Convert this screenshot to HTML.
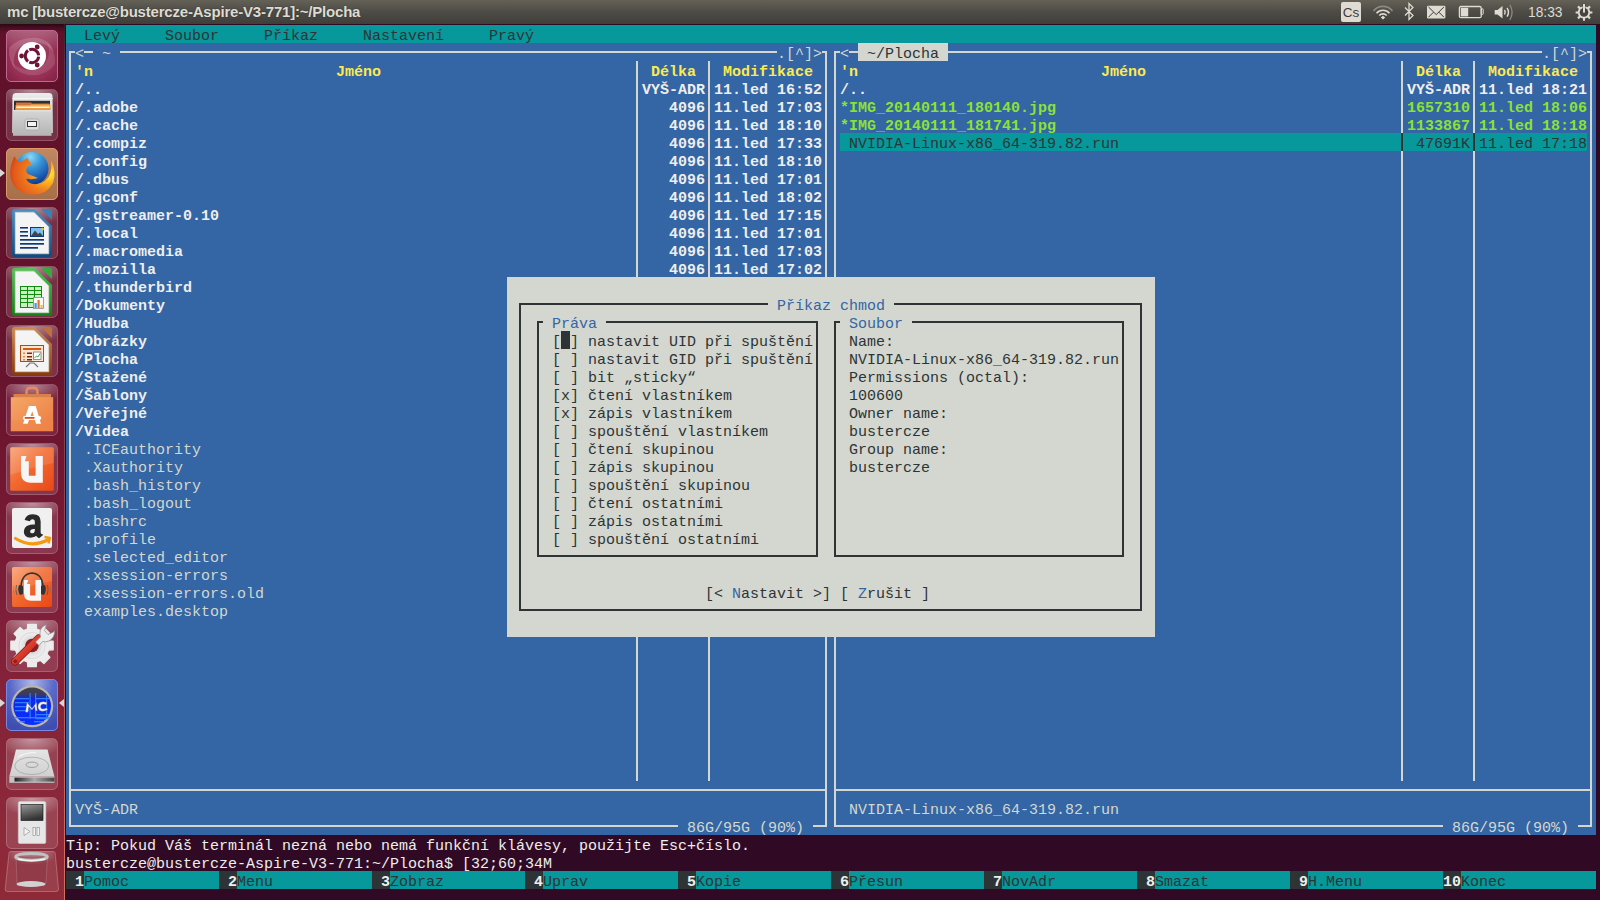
<!DOCTYPE html>
<html><head><meta charset="utf-8"><style>
html,body{margin:0;padding:0;}
body{width:1600px;height:900px;overflow:hidden;position:relative;background:#300A24;}
#t div,#t span,#l div{position:absolute;}
#t span{font-family:"Liberation Mono",monospace;font-size:15px;line-height:18px;white-space:pre;}
#t span.b{font-weight:bold;}
#t span.ms{font-family:"Liberation Sans",sans-serif;font-size:14px;letter-spacing:0.6px}
#top{position:absolute;left:0;top:0;width:1600px;height:24px;background:linear-gradient(#646157 0%,#4f4d47 45%,#3f3e39 100%);}
#top span{position:absolute;font-family:"Liberation Sans",sans-serif;font-weight:bold;font-size:15px;color:#dfdbd2;top:3px;white-space:pre;letter-spacing:-0.2px;text-shadow:0 0 1.5px rgba(0,0,0,0.45)}
#l{position:absolute;left:0;top:24px;width:64px;height:876px;background:linear-gradient(#2c0814 0px,#4a0e22 4px,#60122a 9px,#63132c 276px,#6e1530 416px,#7e1e38 580px,#8e2a38 836px,#8e2a38 876px);}
#l .tile{left:6px;width:52px;height:52px;}
#l svg{position:absolute;left:0;top:0}
</style></head><body>
<div id="top"><span style="left:7px">mc [bustercze@bustercze-Aspire-V3-771]:~/Plocha</span>
<svg style="position:absolute;left:1336px;top:0" width="264" height="24">
<rect x="5" y="2" width="20" height="20" rx="2" fill="#dfdbd2"/>
<text x="15" y="17.3" font-family="Liberation Sans" font-size="13.5" text-anchor="middle" fill="#3c3b37">Cs</text>
<g fill="none" stroke-linecap="butt">
<path d="M37.5 11 A12 12 0 0 1 56.5 11" stroke="#8c8a82" stroke-width="1.6"/>
<path d="M40.5 13.2 A8.5 8.5 0 0 1 53.5 13.2" stroke="#dfdbd2" stroke-width="1.6"/>
<path d="M43.3 15.5 A5 5 0 0 1 50.7 15.5" stroke="#dfdbd2" stroke-width="1.6"/>
</g>
<path d="M44.8 17.6 L47 15.8 L49.2 17.6 L47 19.6Z" fill="#dfdbd2"/>
<path d="M69 7.5 L77 15.5 L73 19.5 V3.5 L77 7.5 L69 15.5" fill="none" stroke="#dfdbd2" stroke-width="1.3" stroke-linejoin="miter"/>
<rect x="91" y="5.8" width="18.4" height="12.6" rx="1.2" fill="#dfdbd2"/>
<path d="M92.5 7 L100.2 14.6 L107.9 7 M92.5 17.2 L97.5 12.2 M107.9 17.2 L102.9 12.2" fill="none" stroke="#3a3935" stroke-width="1"/>
<rect x="123.4" y="6.5" width="21.8" height="11.2" rx="1.5" fill="none" stroke="#dfdbd2" stroke-width="1.3"/>
<rect x="145.2" y="8.8" width="2" height="5.6" rx="0.6" fill="none" stroke="#dfdbd2" stroke-width="1"/>
<rect x="124.8" y="7.8" width="7.4" height="8.6" fill="#dfdbd2"/>
<path d="M158.7 10 H161.5 L166.5 6 V18.5 L161.5 14.5 H158.7Z" fill="#dfdbd2"/>
<path d="M168.5 10 Q170 12.2 168.5 14.5" fill="none" stroke="#dfdbd2" stroke-width="1.4"/>
<path d="M171 7.8 Q174 12.2 171 16.7" fill="none" stroke="#dfdbd2" stroke-width="1.4"/>
<path d="M173.8 4.8 Q178.5 12.2 173.8 20" fill="none" stroke="#8c8a82" stroke-width="1.3"/>
<text x="192" y="16.7" font-family="Liberation Sans" font-size="14" fill="#dfdbd2" textLength="34.5" lengthAdjust="spacingAndGlyphs">18:33</text>
<g transform="translate(248,12.4)" fill="#dfdbd2">
<path d="M-1 -8.4 H1 V-6.2 L3.6 -5.2 L5.2 -6.8 L6.8 -5.2 L5.2 -3.6 L6.2 -1 H8.4 V1 H6.2 L5.2 3.6 L6.8 5.2 L5.2 6.8 L3.6 5.2 L1 6.2 V8.4 H-1 V6.2 L-3.6 5.2 L-5.2 6.8 L-6.8 5.2 L-5.2 3.6 L-6.2 1 H-8.4 V-1 H-6.2 L-5.2 -3.6 L-6.8 -5.2 L-5.2 -6.8 L-3.6 -5.2 L-1 -6.2Z"/>
<circle r="4.3" fill="#45443f"/>
</g>
<rect x="246.6" y="3.6" width="2.8" height="9.4" fill="#45443f"/><rect x="247" y="4" width="2" height="8.6" fill="#dfdbd2"/>
</svg></div>
<div id="l"><div class="tile" style="top:6px"><svg width="52" height="52" style="position:absolute;left:0;top:0"><defs><radialGradient id="ubg" cx="0.5" cy="0.5" r="0.72"><stop offset="0" stop-color="#a84868"/><stop offset="0.6" stop-color="#963054"/><stop offset="1" stop-color="#821e44"/></radialGradient>
<linearGradient id="ubt" x1="0" y1="0" x2="0" y2="1"><stop offset="0" stop-color="#fff" stop-opacity="0.25"/><stop offset="0.4" stop-color="#fff" stop-opacity="0"/></linearGradient></defs>
<rect x="0.5" y="0.5" width="51" height="51" rx="4.5" fill="url(#ubg)" stroke="#c87098" stroke-opacity="0.9"/>
<rect x="1" y="1" width="50" height="50" rx="4" fill="url(#ubt)"/>
<path d="M3 18 Q14 6 32 8 Q44 10 48 22 Q40 12 28 12 Q14 12 9 24 Q6 32 10 40 Q2 30 3 18Z" fill="#fff" fill-opacity="0.16"/>
<path d="M49 34 Q40 47 22 45 Q10 43 5 32 Q14 41 26 40 Q38 39 42 28 Q45 19 40 11 Q50 20 49 34Z" fill="#fff" fill-opacity="0.12"/>
<circle cx="26" cy="26" r="14" fill="#fff"/>
<path d="M32.66 26.70 A6.7 6.7 0 0 1 23.27 32.12 M22.06 31.42 A6.7 6.7 0 0 1 22.06 20.58 M23.27 19.88 A6.7 6.7 0 0 1 32.66 25.30 " fill="none" stroke="#6e1238" stroke-width="3"/><g fill="#6e1238"><circle cx="15.60" cy="26.00" r="2.4"/><circle cx="31.20" cy="16.99" r="2.4"/><circle cx="31.20" cy="35.01" r="2.4"/></g></svg></div><div class="tile" style="top:65px"><svg width="52" height="52" style="position:absolute;left:0;top:0"><rect x="0.5" y="0.5" width="51" height="51" rx="5" fill="#ffffff" fill-opacity="0.13" stroke="#ffffff" stroke-opacity="0.25"/><defs><radialGradient id="glw1" cx="0.5" cy="0" r="0.7"><stop offset="0" stop-color="#fff" stop-opacity="0.45"/><stop offset="1" stop-color="#fff" stop-opacity="0"/></radialGradient></defs><rect x="1" y="1" width="50" height="26" rx="4" fill="url(#glw1)"/><defs><linearGradient id="fb" x1="0" y1="0" x2="0" y2="1"><stop offset="0" stop-color="#ececec"/><stop offset="1" stop-color="#bcbcbc"/></linearGradient>
<linearGradient id="fd" x1="0" y1="0" x2="0" y2="1"><stop offset="0" stop-color="#d6d6d6"/><stop offset="1" stop-color="#b4b4b4"/></linearGradient></defs>
<path d="M6.5 7 Q7 4 10 4 H43 Q46 4 46.5 7 L47 44 H6 Z" fill="url(#fb)"/>
<rect x="6" y="9" width="41" height="1" fill="#fff" fill-opacity="0.6"/>
<rect x="8" y="11.8" width="36" height="9.5" fill="#2e3030"/>
<path d="M10 13.5 H25 L26 14.5 H43.5 V21.3 H10Z" fill="#d8703a"/>
<path d="M9.5 16.3 H24 L25 15.5 H44.5 V21.3 H9.5Z" fill="#f2b050"/>
<rect x="10.5" y="17.6" width="33" height="1.3" fill="#fffaf0"/>
<rect x="9.5" y="19.2" width="35" height="2.1" fill="#e89a40"/>
<rect x="7" y="21.3" width="38.5" height="25.5" fill="url(#fd)"/>
<rect x="7" y="21.3" width="38.5" height="1" fill="#e8e8e8"/>
<rect x="19" y="30" width="14" height="11" rx="2" fill="#dcdcdc" stroke="#a8a8a8" stroke-width="0.8"/>
<rect x="21.5" y="32.5" width="9" height="5" fill="#f4f4f4" stroke="#333" stroke-width="1"/></svg></div><div class="tile" style="top:124px"><svg width="52" height="52" style="position:absolute;left:0;top:0"><defs><linearGradient id="fft" x1="0" y1="0" x2="0" y2="1"><stop offset="0" stop-color="#c08866"/><stop offset="0.5" stop-color="#b07a52"/><stop offset="1" stop-color="#a86e48"/></linearGradient>
<radialGradient id="ffg" cx="0.45" cy="0.15" r="0.9"><stop offset="0" stop-color="#8ad8f8"/><stop offset="0.35" stop-color="#3a9ad8"/><stop offset="0.75" stop-color="#1a58b0"/><stop offset="1" stop-color="#0e2e78"/></radialGradient>
<radialGradient id="ffo" cx="0.85" cy="0.45" r="0.9"><stop offset="0" stop-color="#fff040"/><stop offset="0.2" stop-color="#ffc020"/><stop offset="0.5" stop-color="#f08020"/><stop offset="0.85" stop-color="#e45a1a"/><stop offset="1" stop-color="#d03a18"/></radialGradient></defs>
<rect x="0.5" y="0.5" width="51" height="51" rx="4.5" fill="url(#fft)" stroke="#e8a070" stroke-opacity="0.9"/>
<circle cx="26" cy="20.5" r="16.5" fill="url(#ffg)"/>
<path d="M8.3 8.3 Q3 20 4.5 29 Q8 45 26 46.5 Q41 47 47 35 Q51 24 45 12 Q47 27 39 33 Q32 38 25 35.5 Q20 33 20.5 30.5 Q26 32 32 30 Q27 28 22 26 Q19 23 21 19.5 Q23 17 26 16 L23 13 L21.5 9.8 Q18 13 14 14 Q11 13 8.3 8.3Z" fill="url(#ffo)"/></svg></div><div class="tile" style="top:183px"><svg width="52" height="52" style="position:absolute;left:0;top:0"><rect x="0.5" y="0.5" width="51" height="51" rx="5" fill="#ffffff" fill-opacity="0.13" stroke="#ffffff" stroke-opacity="0.25"/><defs><radialGradient id="glw3" cx="0.5" cy="0" r="0.7"><stop offset="0" stop-color="#fff" stop-opacity="0.45"/><stop offset="1" stop-color="#fff" stop-opacity="0"/></radialGradient></defs><rect x="1" y="1" width="50" height="26" rx="4" fill="url(#glw3)"/><defs><linearGradient id="lg3" x1="0" y1="0" x2="0" y2="1"><stop offset="0" stop-color="#4a90c0"/><stop offset="1" stop-color="#0e4a80"/></linearGradient></defs>
<path d="M8 2 H28.5 L46 19 V47 Q46 50 43 50 H9 Q6 50 6 47 V5 Q6 2 9 2Z" fill="url(#lg3)"/>
<path d="M35 2 H44 Q46 2 46 4 V13 Z" fill="#3a80b8"/>
<path d="M9.2 5.2 H28 L42.8 20 V46.8 H9.2Z" fill="#f4f4f4"/>
<path d="M9.2 5.2 H28 L42.8 20 V46.8 H9.2Z" fill="none" stroke="#ccc" stroke-width="0.6"/>

<g fill="#0a3a7a"><rect x="14" y="20" width="8" height="1.6"/><rect x="14" y="24" width="8" height="1.6"/><rect x="14" y="28" width="8" height="1.6"/>
<rect x="14" y="32" width="24" height="1.7"/><rect x="14" y="36" width="24" height="1.7"/><rect x="14" y="40" width="18" height="1.7"/></g>
<rect x="24" y="20" width="14" height="10" fill="#0a3a7a"/><rect x="25" y="21" width="12" height="8" fill="#7ac0f0"/>
<path d="M25 29 L29 23.5 L32 27 L34 25.5 L37 29Z" fill="#444"/><circle cx="36.5" cy="22" r="1.5" fill="#e8c030"/></svg></div><div class="tile" style="top:242px"><svg width="52" height="52" style="position:absolute;left:0;top:0"><rect x="0.5" y="0.5" width="51" height="51" rx="5" fill="#ffffff" fill-opacity="0.13" stroke="#ffffff" stroke-opacity="0.25"/><defs><radialGradient id="glw4" cx="0.5" cy="0" r="0.7"><stop offset="0" stop-color="#fff" stop-opacity="0.45"/><stop offset="1" stop-color="#fff" stop-opacity="0"/></radialGradient></defs><rect x="1" y="1" width="50" height="26" rx="4" fill="url(#glw4)"/><defs><linearGradient id="lg4" x1="0" y1="0" x2="0" y2="1"><stop offset="0" stop-color="#5ac05a"/><stop offset="1" stop-color="#128012"/></linearGradient></defs>
<path d="M8 2 H28.5 L46 19 V47 Q46 50 43 50 H9 Q6 50 6 47 V5 Q6 2 9 2Z" fill="url(#lg4)"/>
<path d="M35 2 H44 Q46 2 46 4 V13 Z" fill="#3aa83a"/>
<path d="M9.2 5.2 H28 L42.8 20 V46.8 H9.2Z" fill="#f4f4f4"/>
<path d="M9.2 5.2 H28 L42.8 20 V46.8 H9.2Z" fill="none" stroke="#ccc" stroke-width="0.6"/>

<rect x="14" y="20" width="22" height="22" fill="#128a12"/>
<g fill="#c8f0c0"><rect x="15" y="21" width="6" height="3"/><rect x="22" y="21" width="6" height="3"/><rect x="29" y="21" width="6" height="3"/>
<rect x="15" y="25" width="6" height="3"/><rect x="22" y="25" width="6" height="3"/><rect x="29" y="25" width="6" height="3"/>
<rect x="15" y="29" width="6" height="3"/><rect x="22" y="29" width="6" height="3"/><rect x="29" y="29" width="6" height="3"/>
<rect x="15" y="33" width="6" height="3"/><rect x="22" y="33" width="6" height="3"/><rect x="15" y="37" width="6" height="4"/><rect x="22" y="37" width="6" height="4"/></g>
<rect x="27.5" y="31.5" width="10" height="11" fill="#fafafa" stroke="#888" stroke-width="0.8"/>
<rect x="28.5" y="37" width="2.2" height="5" fill="#3a9ae8"/><rect x="31.5" y="34" width="2.2" height="8" fill="#e8702a"/><rect x="34.5" y="39" width="2.2" height="3" fill="#f0c030"/></svg></div><div class="tile" style="top:301px"><svg width="52" height="52" style="position:absolute;left:0;top:0"><rect x="0.5" y="0.5" width="51" height="51" rx="5" fill="#ffffff" fill-opacity="0.13" stroke="#ffffff" stroke-opacity="0.25"/><defs><radialGradient id="glw5" cx="0.5" cy="0" r="0.7"><stop offset="0" stop-color="#fff" stop-opacity="0.45"/><stop offset="1" stop-color="#fff" stop-opacity="0"/></radialGradient></defs><rect x="1" y="1" width="50" height="26" rx="4" fill="url(#glw5)"/><defs><linearGradient id="lg5" x1="0" y1="0" x2="0" y2="1"><stop offset="0" stop-color="#d08a50"/><stop offset="1" stop-color="#8a3a0a"/></linearGradient></defs>
<path d="M8 2 H28.5 L46 19 V47 Q46 50 43 50 H9 Q6 50 6 47 V5 Q6 2 9 2Z" fill="url(#lg5)"/>
<path d="M35 2 H44 Q46 2 46 4 V13 Z" fill="#c0703a"/>
<path d="M9.2 5.2 H28 L42.8 20 V46.8 H9.2Z" fill="#f4f4f4"/>
<path d="M9.2 5.2 H28 L42.8 20 V46.8 H9.2Z" fill="none" stroke="#ccc" stroke-width="0.6"/>

<rect x="14" y="20" width="24" height="17" fill="#b04a10"/><rect x="15" y="21" width="22" height="15" fill="#fbe6d4"/>
<rect x="17" y="23" width="18" height="2" fill="#d85a10"/>
<g fill="#e88050"><rect x="17" y="27.5" width="2" height="1.5"/><rect x="17" y="31" width="2" height="1.5"/><rect x="17" y="34" width="2" height="1.5"/></g>
<g fill="#7a2a0a"><rect x="21" y="27.5" width="5" height="1.5"/><rect x="21" y="31" width="5" height="1.5"/><rect x="21" y="34" width="5" height="1.5"/></g>
<rect x="27.5" y="27" width="7.5" height="7.5" fill="#fff" stroke="#777" stroke-width="0.8"/><path d="M28.5 33 L30.5 31 L32 32 L34 28.5" stroke="#3aa83a" fill="none" stroke-width="1"/>
<path d="M20 42 L24 38 H28 L32 42" stroke="#777" fill="none" stroke-width="1.2"/></svg></div><div class="tile" style="top:360px"><svg width="52" height="52" style="position:absolute;left:0;top:0"><rect x="0.5" y="0.5" width="51" height="51" rx="5" fill="#e0a0c0" fill-opacity="0.12" stroke="#ffffff" stroke-opacity="0.25"/><defs><radialGradient id="glw6" cx="0.5" cy="0" r="0.7"><stop offset="0" stop-color="#fff" stop-opacity="0.45"/><stop offset="1" stop-color="#fff" stop-opacity="0"/></radialGradient></defs><rect x="1" y="1" width="50" height="26" rx="4" fill="url(#glw6)"/><defs><linearGradient id="sbag" x1="0" y1="0" x2="1" y2="1"><stop offset="0" stop-color="#f4a868"/><stop offset="1" stop-color="#ec7a3e"/></linearGradient></defs>
<path d="M20.5 17 V8 Q20.5 4 24 4 H28 Q31.5 4 31.5 8 V17" stroke="#ea8a5a" stroke-width="2.4" fill="none"/>
<path d="M7.5 10 H45 V14 H7.5Z" fill="#d8804a"/>
<rect x="4.8" y="13.2" width="42.4" height="34" fill="url(#sbag)"/>
<rect x="4.8" y="36.6" width="42.4" height="10.6" fill="#f08850" fill-opacity="0.5"/>
<path d="M22.9 22 H29.7 L35 39.7 H30 L26.3 27.2 L21.6 39.7 H17Z" fill="#fff"/>
<rect x="16.9" y="31.9" width="18.3" height="4" rx="2" fill="#fff"/><rect x="18.5" y="33.1" width="10.2" height="1.6" rx="0.8" fill="#e84a10"/></svg></div><div class="tile" style="top:419px"><svg width="52" height="52" style="position:absolute;left:0;top:0"><rect x="0.5" y="0.5" width="51" height="51" rx="5" fill="#ffffff" fill-opacity="0.13" stroke="#ffffff" stroke-opacity="0.25"/><defs><radialGradient id="glw7" cx="0.5" cy="0" r="0.7"><stop offset="0" stop-color="#fff" stop-opacity="0.45"/><stop offset="1" stop-color="#fff" stop-opacity="0"/></radialGradient></defs><rect x="1" y="1" width="50" height="26" rx="4" fill="url(#glw7)"/><defs><linearGradient id="u1g" x1="0" y1="0" x2="1" y2="1"><stop offset="0" stop-color="#f8a070"/><stop offset="0.45" stop-color="#f26a30"/><stop offset="1" stop-color="#e84818"/></linearGradient></defs>
<rect x="4.2" y="4.2" width="43.6" height="43.6" rx="1.5" fill="url(#u1g)"/><path d="M4.2 5.7 Q4.2 4.2 5.7 4.2 H46.3 Q47.8 4.2 47.8 5.7 V20 Q26 24 4.2 32Z" fill="#fff" fill-opacity="0.12"/><g transform="translate(15,13) scale(1.0)"><path d="M0 0 H5.5 L3.8 5.2 H7.8 V19.8 H14.6 V0 H21.8 V26.7 H9 Q0 26.7 0 17Z" fill="#f6f6f6"/></g></svg></div><div class="tile" style="top:478px"><svg width="52" height="52" style="position:absolute;left:0;top:0"><rect x="0.5" y="0.5" width="51" height="51" rx="5" fill="#ffffff" fill-opacity="0.13" stroke="#ffffff" stroke-opacity="0.25"/><defs><radialGradient id="glw8" cx="0.5" cy="0" r="0.7"><stop offset="0" stop-color="#fff" stop-opacity="0.45"/><stop offset="1" stop-color="#fff" stop-opacity="0"/></radialGradient></defs><rect x="1" y="1" width="50" height="26" rx="4" fill="url(#glw8)"/><rect x="6" y="6" width="40" height="40" rx="2" fill="#f0f0f0"/>
<path d="M19.5 17.5 Q21 13 27 13 Q34 13 34 19.5 V30.5 Q34 32.5 36 33 L33 35.5 Q31 34.5 30.5 33 Q28 35 24.5 35 Q18.5 35 18.5 29.5 Q18.5 23 29.5 23 V20 Q29.5 16.5 26.5 16.5 Q24 16.5 23.5 18.5Z M29.5 26 Q23.5 26 23.5 29.5 Q23.5 32 26 32 Q29.5 32 29.5 28Z" fill="#2a2a2a" stroke="#2a2a2a" stroke-width="1.3"/>
<path d="M9.5 36.5 Q26 46.5 42.5 37.5" stroke="#f49a10" stroke-width="3.2" fill="none" stroke-linecap="round"/><path d="M38.5 35 L44 36 L42.5 41.5" stroke="#f49a10" stroke-width="2.4" fill="none" stroke-linejoin="round"/></svg></div><div class="tile" style="top:537px"><svg width="52" height="52" style="position:absolute;left:0;top:0"><rect x="0.5" y="0.5" width="51" height="51" rx="5" fill="#ffffff" fill-opacity="0.13" stroke="#ffffff" stroke-opacity="0.25"/><defs><radialGradient id="glw9" cx="0.5" cy="0" r="0.7"><stop offset="0" stop-color="#fff" stop-opacity="0.45"/><stop offset="1" stop-color="#fff" stop-opacity="0"/></radialGradient></defs><rect x="1" y="1" width="50" height="26" rx="4" fill="url(#glw9)"/><defs><linearGradient id="u1m" x1="0" y1="0" x2="1" y2="1"><stop offset="0" stop-color="#f8a070"/><stop offset="0.45" stop-color="#f26a30"/><stop offset="1" stop-color="#e84818"/></linearGradient></defs>
<rect x="6" y="6" width="40" height="40" rx="2" fill="url(#u1m)"/><path d="M6 8 Q6 6 8 6 H44 Q46 6 46 8 V20 Q26 24 6 30Z" fill="#fff" fill-opacity="0.12"/>
<path d="M15 30 Q14 13 26 12 Q38 13 37 30" stroke="#333" stroke-width="1.6" fill="none"/>
<path d="M13 24 Q11 29 14 34 L17 33 V25Z" fill="#333"/><path d="M39 24 Q41 29 38 34 L35 33 V25Z" fill="#333"/>
<path d="M10.5 24 Q9 29 11 34" stroke="#555" fill="none" stroke-width="0.8"/><path d="M41.5 24 Q43 29 41 34" stroke="#555" fill="none" stroke-width="0.8"/><path d="M8 25 Q7 29 8.3 33" stroke="#666" fill="none" stroke-width="0.6" opacity="0.7"/><path d="M44 25 Q45 29 43.7 33" stroke="#666" fill="none" stroke-width="0.6" opacity="0.7"/><g transform="translate(18,19) scale(0.78)"><path d="M0 0 H5.5 L3.8 5.2 H7.8 V19.8 H14.6 V0 H21.8 V26.7 H9 Q0 26.7 0 17Z" fill="#f6f6f6"/></g></svg></div><div class="tile" style="top:596px"><svg width="52" height="52" style="position:absolute;left:0;top:0"><rect x="0.5" y="0.5" width="51" height="51" rx="5" fill="#ffffff" fill-opacity="0.13" stroke="#ffffff" stroke-opacity="0.25"/><defs><radialGradient id="glw10" cx="0.5" cy="0" r="0.7"><stop offset="0" stop-color="#fff" stop-opacity="0.45"/><stop offset="1" stop-color="#fff" stop-opacity="0"/></radialGradient></defs><rect x="1" y="1" width="50" height="26" rx="4" fill="url(#glw10)"/><defs><linearGradient id="wr" x1="0" y1="0" x2="1" y2="1"><stop offset="0" stop-color="#f06a58"/><stop offset="0.5" stop-color="#d83a2a"/><stop offset="1" stop-color="#a81a1a"/></linearGradient>
<radialGradient id="gr" cx="0.5" cy="0.5" r="0.5"><stop offset="0.45" stop-color="#d4d4d4"/><stop offset="1" stop-color="#f2f2f2"/></radialGradient></defs>
<path d="M42.57 20.90 L47.17 21.19 L47.17 29.81 L42.57 30.10 L40.97 33.97 L44.01 37.42 L37.92 43.51 L34.47 40.47 L30.60 42.07 L30.31 46.67 L21.69 46.67 L21.40 42.07 L17.53 40.47 L14.08 43.51 L7.99 37.42 L11.03 33.97 L9.43 30.10 L4.83 29.81 L4.83 21.19 L9.43 20.90 L11.03 17.03 L7.99 13.58 L14.08 7.49 L17.53 10.53 L21.40 8.93 L21.69 4.33 L30.31 4.33 L30.60 8.93 L34.47 10.53 L37.92 7.49 L44.01 13.58 L40.97 17.03Z" fill="#ececec" stroke="#ececec" stroke-width="1.2" stroke-linejoin="round"/>
<circle cx="26" cy="25.5" r="13" fill="url(#gr)" stroke="#c8c8c8" stroke-width="0.6"/><circle cx="26" cy="25.5" r="6.8" fill="#8a2030"/>
<path d="M9 41.5 L32.5 18.5" stroke="#8a1414" stroke-width="7.8" stroke-linecap="round"/>
<path d="M9 41.5 L32.5 18.5" stroke="url(#wr)" stroke-width="6.4" stroke-linecap="round"/>
<circle cx="9.2" cy="41.3" r="1.5" fill="#a02020" stroke="#701010" stroke-width="0.6"/>
<path d="M29.5 22 L34.5 17 Q32.5 10 37.5 6 L40.5 4.8 L38.5 10.5 L42 14.5 L47.5 12 L48.5 10.5 Q49 17.5 43 21 Q39.5 22.5 36.5 21.5 L33 25.5Z" fill="#ececec" stroke="#8a8a8a" stroke-width="0.7"/></svg></div><div class="tile" style="top:655px"><svg width="52" height="52" style="position:absolute;left:0;top:0"><defs><radialGradient id="mct" cx="0.5" cy="0.05" r="0.95"><stop offset="0" stop-color="#b0b8e8"/><stop offset="0.45" stop-color="#5a6ac8"/><stop offset="1" stop-color="#3e4eb0"/></radialGradient>
<linearGradient id="mcs" x1="0" y1="0" x2="0" y2="1"><stop offset="0" stop-color="#444"/><stop offset="0.18" stop-color="#3a3a60"/><stop offset="0.3" stop-color="#0a28f0"/><stop offset="1" stop-color="#0a30ff"/></linearGradient></defs>
<rect x="0.5" y="0.5" width="51" height="51" rx="4.5" fill="url(#mct)" stroke="#7a90f0" stroke-opacity="0.9"/>
<circle cx="26.2" cy="27.3" r="21" fill="#bcb6ae"/><circle cx="26.2" cy="27.3" r="18.8" fill="url(#mcs)"/>
<g fill="#3a8aff" opacity="0.85"><rect x="9" y="19" width="14" height="1.3"/><rect x="9" y="23" width="14" height="1.3"/><rect x="9" y="27" width="14" height="1.3"/><rect x="9" y="31" width="14" height="1.3"/>
<rect x="30" y="19" width="13" height="1.3"/><rect x="30" y="35" width="13" height="1.3"/><rect x="30" y="39" width="13" height="1.3"/><rect x="8" y="38" width="36" height="1.3"/>
<rect x="13" y="42" width="6" height="1.3"/><rect x="28" y="42" width="10" height="1.3"/>
<rect x="23.5" y="14" width="1.2" height="26"/><rect x="29" y="14" width="1.2" height="26"/><rect x="40" y="16" width="1.2" height="24"/></g>
<path d="M19.5 33 L21 23.5 L26 29.5 L30.5 23.5 L31.2 32 L29.2 31.3 L28.8 27.3 L26 31 L22.8 27.5 L21.8 33.2Z" fill="#f4f4f4" stroke="#888" stroke-width="0.4"/>
<path d="M41 23.5 Q37 22 34.3 23.3 Q31.6 25 32 28.5 Q32.5 32.2 36.5 32.2 Q39 32.2 41.5 30.8 L40.6 29 Q38.5 30 36.8 30 Q34.6 30 34.5 27.8 Q34.5 25.3 37 25.1 Q38.8 25 40.3 25.8Z" fill="#f4f4f4" stroke="#888" stroke-width="0.4"/></svg></div><div class="tile" style="top:714px"><svg width="52" height="52" style="position:absolute;left:0;top:0"><rect x="0.5" y="0.5" width="51" height="51" rx="5" fill="#ffffff" fill-opacity="0.13" stroke="#ffffff" stroke-opacity="0.25"/><defs><radialGradient id="glw11" cx="0.5" cy="0" r="0.7"><stop offset="0" stop-color="#fff" stop-opacity="0.45"/><stop offset="1" stop-color="#fff" stop-opacity="0"/></radialGradient></defs><rect x="1" y="1" width="50" height="26" rx="4" fill="url(#glw11)"/><defs><linearGradient id="dsk" x1="0" y1="0" x2="0" y2="1"><stop offset="0" stop-color="#e4e4e4"/><stop offset="1" stop-color="#d0d0d0"/></linearGradient>
<linearGradient id="dsf" x1="0" y1="0" x2="1" y2="0"><stop offset="0" stop-color="#222"/><stop offset="0.5" stop-color="#aaa"/><stop offset="1" stop-color="#444"/></linearGradient></defs>
<path d="M10 11.5 H41.5 L48.4 38.6 H3.3Z" fill="url(#dsk)"/>
<rect x="3.3" y="38.4" width="45.1" height="6.4" fill="#c4c4c4"/>
<rect x="8.5" y="39.6" width="39.9" height="4" fill="url(#dsf)"/>
<path d="M12 19 Q22 14 30 14.5" stroke="#f4f4f4" stroke-width="1.2" fill="none"/>
<ellipse cx="25.8" cy="27.9" rx="17" ry="8.7" fill="none" stroke="#a0a0a0" stroke-width="0.7"/><ellipse cx="26" cy="26.8" rx="6" ry="2.7" fill="none" stroke="#909090" stroke-width="0.8"/></svg></div><div class="tile" style="top:773px"><svg width="52" height="52" style="position:absolute;left:0;top:0"><rect x="0.5" y="0.5" width="51" height="51" rx="5" fill="#ffffff" fill-opacity="0.13" stroke="#ffffff" stroke-opacity="0.25"/><defs><radialGradient id="glw12" cx="0.5" cy="0" r="0.7"><stop offset="0" stop-color="#fff" stop-opacity="0.45"/><stop offset="1" stop-color="#fff" stop-opacity="0"/></radialGradient></defs><rect x="1" y="1" width="50" height="26" rx="4" fill="url(#glw12)"/><defs><linearGradient id="ips" x1="0" y1="0" x2="0.3" y2="1"><stop offset="0" stop-color="#999"/><stop offset="1" stop-color="#333"/></linearGradient></defs>
<rect x="12.3" y="4.5" width="27.5" height="42" rx="1.5" fill="#e6e6e6" stroke="#cfcfcf" stroke-width="0.6"/>
<rect x="15" y="7.5" width="22" height="16" fill="url(#ips)" stroke="#222" stroke-width="0.7"/>
<path d="M18 30.5 L24 34.5 L18 38.5Z" fill="#f4f4f4" stroke="#888" stroke-width="0.6"/>
<rect x="27" y="30.5" width="2.3" height="8" fill="#f4f4f4" stroke="#888" stroke-width="0.6"/><rect x="31" y="30.5" width="2.3" height="8" fill="#f4f4f4" stroke="#888" stroke-width="0.6"/></svg></div><svg style="position:absolute;left:0;top:820px" width="64" height="56"><defs><radialGradient id="trg" cx="0.5" cy="0" r="0.6"><stop offset="0" stop-color="#fff" stop-opacity="0.35"/><stop offset="1" stop-color="#fff" stop-opacity="0"/></radialGradient></defs><path d="M10.5 7.5 H53.5 Q55 7.5 55.2 9 L58.5 45 Q58.5 47.5 56 47.5 H7.5 Q5 47.5 5.2 45 L9 9 Q9 7.5 10.5 7.5Z" fill="#fff" fill-opacity="0.1" stroke="#fff" stroke-opacity="0.25"/><path d="M10.5 7.5 H53.5 L56 30 H8Z" fill="url(#trg)"/><path d="M16 12 L17 39 Q32 44 46 39 L47.5 12Z" fill="#000" fill-opacity="0.06" stroke="#fff" stroke-opacity="0.15"/><ellipse cx="31.5" cy="12.8" rx="15.8" ry="3.4" fill="none" stroke="#bfc2bf" stroke-width="3"/><path d="M18 15 Q31.5 18.5 45 15" stroke="#f4f4f4" stroke-width="1.4" fill="none"/><ellipse cx="31" cy="40" rx="14.5" ry="3" fill="#d0d4d0"/></svg><div style="left:0;top:145px;width:0;height:0;border-top:4.5px solid transparent;border-bottom:4.5px solid transparent;border-left:5px solid #d8d8d8"></div><div style="left:0;top:675px;width:0;height:0;border-top:4.5px solid transparent;border-bottom:4.5px solid transparent;border-left:5px solid #d8d8d8"></div><div style="left:59px;top:675px;width:0;height:0;border-top:4.5px solid transparent;border-bottom:4.5px solid transparent;border-right:5px solid #d8d8d8"></div></div>
<div style="position:absolute;left:64px;top:24px;width:1px;height:876px;background:linear-gradient(#3a1a24 0px,#5e3444 40px,#6a3a4a 276px,#9a5058 580px,#d07060 836px,#d07060 876px)"></div>
<div id="t"><div style="left:66px;top:25px;width:1530px;height:18px;background:#06989A;"></div><span style="left:84px;top:28px;color:#2E3436">Levý</span><span style="left:165px;top:28px;color:#2E3436">Soubor</span><span style="left:264px;top:28px;color:#2E3436">Příkaz</span><span style="left:363px;top:28px;color:#2E3436">Nastavení</span><span style="left:489px;top:28px;color:#2E3436">Pravý</span><div style="left:66px;top:43px;width:1530px;height:792px;background:#3465A4;"></div><div style="left:69px;top:51px;width:2px;height:776px;background:#D3D7CF;"></div><div style="left:825px;top:51px;width:2px;height:776px;background:#D3D7CF;"></div><div style="left:69px;top:51px;width:6px;height:2px;background:#D3D7CF;"></div><div style="left:84px;top:51px;width:9px;height:2px;background:#D3D7CF;"></div><span style="left:75px;top:46px;color:#D3D7CF">&lt;</span><span style="left:93px;top:46px;color:#D3D7CF"> ~ </span><div style="left:120px;top:51px;width:657px;height:2px;background:#D3D7CF;"></div><span style="left:777px;top:46px;color:#D3D7CF">.[^]&gt;</span><div style="left:822px;top:51px;width:5px;height:2px;background:#D3D7CF;"></div><span class="b" style="left:75px;top:64px;color:#FCE94F">'n</span><span class="b" style="left:336px;top:64px;color:#FCE94F">Jméno</span><span class="b" style="left:651px;top:64px;color:#FCE94F">Délka</span><span class="b" style="left:723px;top:64px;color:#FCE94F">Modifikace</span><div style="left:636px;top:61px;width:2px;height:720px;background:#D3D7CF;"></div><div style="left:708px;top:61px;width:2px;height:720px;background:#D3D7CF;"></div><span class="b" style="left:75px;top:82px;color:#EEEEEC">/..</span><span class="b" style="left:642px;top:82px;color:#EEEEEC">VYŠ-ADR</span><span class="b" style="left:714px;top:82px;color:#EEEEEC">11.led 16:52</span><span class="b" style="left:75px;top:100px;color:#EEEEEC">/.adobe</span><span class="b" style="left:642px;top:100px;color:#EEEEEC">   4096</span><span class="b" style="left:714px;top:100px;color:#EEEEEC">11.led 17:03</span><span class="b" style="left:75px;top:118px;color:#EEEEEC">/.cache</span><span class="b" style="left:642px;top:118px;color:#EEEEEC">   4096</span><span class="b" style="left:714px;top:118px;color:#EEEEEC">11.led 18:10</span><span class="b" style="left:75px;top:136px;color:#EEEEEC">/.compiz</span><span class="b" style="left:642px;top:136px;color:#EEEEEC">   4096</span><span class="b" style="left:714px;top:136px;color:#EEEEEC">11.led 17:33</span><span class="b" style="left:75px;top:154px;color:#EEEEEC">/.config</span><span class="b" style="left:642px;top:154px;color:#EEEEEC">   4096</span><span class="b" style="left:714px;top:154px;color:#EEEEEC">11.led 18:10</span><span class="b" style="left:75px;top:172px;color:#EEEEEC">/.dbus</span><span class="b" style="left:642px;top:172px;color:#EEEEEC">   4096</span><span class="b" style="left:714px;top:172px;color:#EEEEEC">11.led 17:01</span><span class="b" style="left:75px;top:190px;color:#EEEEEC">/.gconf</span><span class="b" style="left:642px;top:190px;color:#EEEEEC">   4096</span><span class="b" style="left:714px;top:190px;color:#EEEEEC">11.led 18:02</span><span class="b" style="left:75px;top:208px;color:#EEEEEC">/.gstreamer-0.10</span><span class="b" style="left:642px;top:208px;color:#EEEEEC">   4096</span><span class="b" style="left:714px;top:208px;color:#EEEEEC">11.led 17:15</span><span class="b" style="left:75px;top:226px;color:#EEEEEC">/.local</span><span class="b" style="left:642px;top:226px;color:#EEEEEC">   4096</span><span class="b" style="left:714px;top:226px;color:#EEEEEC">11.led 17:01</span><span class="b" style="left:75px;top:244px;color:#EEEEEC">/.macromedia</span><span class="b" style="left:642px;top:244px;color:#EEEEEC">   4096</span><span class="b" style="left:714px;top:244px;color:#EEEEEC">11.led 17:03</span><span class="b" style="left:75px;top:262px;color:#EEEEEC">/.mozilla</span><span class="b" style="left:642px;top:262px;color:#EEEEEC">   4096</span><span class="b" style="left:714px;top:262px;color:#EEEEEC">11.led 17:02</span><span class="b" style="left:75px;top:280px;color:#EEEEEC">/.thunderbird</span><span class="b" style="left:75px;top:298px;color:#EEEEEC">/Dokumenty</span><span class="b" style="left:75px;top:316px;color:#EEEEEC">/Hudba</span><span class="b" style="left:75px;top:334px;color:#EEEEEC">/Obrázky</span><span class="b" style="left:75px;top:352px;color:#EEEEEC">/Plocha</span><span class="b" style="left:75px;top:370px;color:#EEEEEC">/Stažené</span><span class="b" style="left:75px;top:388px;color:#EEEEEC">/Šablony</span><span class="b" style="left:75px;top:406px;color:#EEEEEC">/Veřejné</span><span class="b" style="left:75px;top:424px;color:#EEEEEC">/Videa</span><span style="left:75px;top:442px;color:#D3D7CF"> .ICEauthority</span><span style="left:75px;top:460px;color:#D3D7CF"> .Xauthority</span><span style="left:75px;top:478px;color:#D3D7CF"> .bash_history</span><span style="left:75px;top:496px;color:#D3D7CF"> .bash_logout</span><span style="left:75px;top:514px;color:#D3D7CF"> .bashrc</span><span style="left:75px;top:532px;color:#D3D7CF"> .profile</span><span style="left:75px;top:550px;color:#D3D7CF"> .selected_editor</span><span style="left:75px;top:568px;color:#D3D7CF"> .xsession-errors</span><span style="left:75px;top:586px;color:#D3D7CF"> .xsession-errors.old</span><span style="left:75px;top:604px;color:#D3D7CF"> examples.desktop</span><div style="left:69px;top:789px;width:758px;height:2px;background:#D3D7CF;"></div><span style="left:75px;top:802px;color:#D3D7CF">VYŠ-ADR</span><div style="left:69px;top:825px;width:609px;height:2px;background:#D3D7CF;"></div><span style="left:687px;top:820px;color:#D3D7CF">86G/95G (90%)</span><div style="left:813px;top:825px;width:14px;height:2px;background:#D3D7CF;"></div><div style="left:834px;top:51px;width:2px;height:776px;background:#D3D7CF;"></div><div style="left:1590px;top:51px;width:2px;height:776px;background:#D3D7CF;"></div><div style="left:834px;top:51px;width:6px;height:2px;background:#D3D7CF;"></div><div style="left:849px;top:51px;width:9px;height:2px;background:#D3D7CF;"></div><span style="left:840px;top:46px;color:#D3D7CF">&lt;</span><div style="left:858px;top:43px;width:90px;height:18px;background:#D3D7CF;"></div><span style="left:858px;top:46px;color:#2E3436"> ~/Plocha </span><div style="left:948px;top:51px;width:594px;height:2px;background:#D3D7CF;"></div><span style="left:1542px;top:46px;color:#D3D7CF">.[^]&gt;</span><div style="left:1587px;top:51px;width:5px;height:2px;background:#D3D7CF;"></div><span class="b" style="left:840px;top:64px;color:#FCE94F">'n</span><span class="b" style="left:1101px;top:64px;color:#FCE94F">Jméno</span><span class="b" style="left:1416px;top:64px;color:#FCE94F">Délka</span><span class="b" style="left:1488px;top:64px;color:#FCE94F">Modifikace</span><div style="left:1401px;top:61px;width:2px;height:720px;background:#D3D7CF;"></div><div style="left:1473px;top:61px;width:2px;height:720px;background:#D3D7CF;"></div><span class="b" style="left:840px;top:82px;color:#EEEEEC">/..</span><span class="b" style="left:1407px;top:82px;color:#EEEEEC">VYŠ-ADR</span><span class="b" style="left:1479px;top:82px;color:#EEEEEC">11.led 18:21</span><span class="b" style="left:840px;top:100px;color:#8AE234">*IMG_20140111_180140.jpg</span><span class="b" style="left:1407px;top:100px;color:#8AE234">1657310</span><span class="b" style="left:1479px;top:100px;color:#8AE234">11.led 18:06</span><span class="b" style="left:840px;top:118px;color:#8AE234">*IMG_20140111_181741.jpg</span><span class="b" style="left:1407px;top:118px;color:#8AE234">1133867</span><span class="b" style="left:1479px;top:118px;color:#8AE234">11.led 18:18</span><div style="left:840px;top:133px;width:747px;height:18px;background:#06989A;"></div><div style="left:1401px;top:133px;width:2px;height:18px;background:#2E3436;"></div><div style="left:1473px;top:133px;width:2px;height:18px;background:#2E3436;"></div><span style="left:840px;top:136px;color:#2E3436"> NVIDIA-Linux-x86_64-319.82.run</span><span style="left:1407px;top:136px;color:#2E3436"> 47691K</span><span style="left:1479px;top:136px;color:#2E3436">11.led 17:18</span><div style="left:834px;top:789px;width:758px;height:2px;background:#D3D7CF;"></div><span style="left:840px;top:802px;color:#D3D7CF"> NVIDIA-Linux-x86_64-319.82.run</span><div style="left:834px;top:825px;width:609px;height:2px;background:#D3D7CF;"></div><span style="left:1452px;top:820px;color:#D3D7CF">86G/95G (90%)</span><div style="left:1578px;top:825px;width:14px;height:2px;background:#D3D7CF;"></div><div style="left:507px;top:277px;width:648px;height:18px;background:#D3D7CF;"></div><div style="left:507px;top:295px;width:648px;height:18px;background:#D3D7CF;"></div><div style="left:507px;top:313px;width:648px;height:18px;background:#D3D7CF;"></div><div style="left:507px;top:331px;width:648px;height:18px;background:#D3D7CF;"></div><div style="left:507px;top:349px;width:648px;height:18px;background:#D3D7CF;"></div><div style="left:507px;top:367px;width:648px;height:18px;background:#D3D7CF;"></div><div style="left:507px;top:385px;width:648px;height:18px;background:#D3D7CF;"></div><div style="left:507px;top:403px;width:648px;height:18px;background:#D3D7CF;"></div><div style="left:507px;top:421px;width:648px;height:18px;background:#D3D7CF;"></div><div style="left:507px;top:439px;width:648px;height:18px;background:#D3D7CF;"></div><div style="left:507px;top:457px;width:648px;height:18px;background:#D3D7CF;"></div><div style="left:507px;top:475px;width:648px;height:18px;background:#D3D7CF;"></div><div style="left:507px;top:493px;width:648px;height:18px;background:#D3D7CF;"></div><div style="left:507px;top:511px;width:648px;height:18px;background:#D3D7CF;"></div><div style="left:507px;top:529px;width:648px;height:18px;background:#D3D7CF;"></div><div style="left:507px;top:547px;width:648px;height:18px;background:#D3D7CF;"></div><div style="left:507px;top:565px;width:648px;height:18px;background:#D3D7CF;"></div><div style="left:507px;top:583px;width:648px;height:18px;background:#D3D7CF;"></div><div style="left:507px;top:601px;width:648px;height:18px;background:#D3D7CF;"></div><div style="left:507px;top:619px;width:648px;height:18px;background:#D3D7CF;"></div><div style="left:519px;top:303px;width:249px;height:2px;background:#2E3436;"></div><span style="left:777px;top:298px;color:#3465A4">Příkaz chmod</span><div style="left:894px;top:303px;width:248px;height:2px;background:#2E3436;"></div><div style="left:519px;top:303px;width:2px;height:308px;background:#2E3436;"></div><div style="left:1140px;top:303px;width:2px;height:308px;background:#2E3436;"></div><div style="left:519px;top:609px;width:623px;height:2px;background:#2E3436;"></div><div style="left:537px;top:321px;width:6px;height:2px;background:#2E3436;"></div><span style="left:552px;top:316px;color:#3465A4">Práva</span><div style="left:606px;top:321px;width:212px;height:2px;background:#2E3436;"></div><div style="left:537px;top:321px;width:2px;height:236px;background:#2E3436;"></div><div style="left:816px;top:321px;width:2px;height:236px;background:#2E3436;"></div><div style="left:537px;top:555px;width:281px;height:2px;background:#2E3436;"></div><span style="left:552px;top:334px;color:#2E3436">[ ] nastavit UID při spuštění</span><span style="left:552px;top:352px;color:#2E3436">[ ] nastavit GID při spuštění</span><span style="left:552px;top:370px;color:#2E3436">[ ] bit „sticky“</span><span style="left:552px;top:388px;color:#2E3436">[x] čtení vlastníkem</span><span style="left:552px;top:406px;color:#2E3436">[x] zápis vlastníkem</span><span style="left:552px;top:424px;color:#2E3436">[ ] spouštění vlastníkem</span><span style="left:552px;top:442px;color:#2E3436">[ ] čtení skupinou</span><span style="left:552px;top:460px;color:#2E3436">[ ] zápis skupinou</span><span style="left:552px;top:478px;color:#2E3436">[ ] spouštění skupinou</span><span style="left:552px;top:496px;color:#2E3436">[ ] čtení ostatními</span><span style="left:552px;top:514px;color:#2E3436">[ ] zápis ostatními</span><span style="left:552px;top:532px;color:#2E3436">[ ] spouštění ostatními</span><div style="left:561px;top:331px;width:9px;height:18px;background:#2E3436;"></div><div style="left:834px;top:321px;width:6px;height:2px;background:#2E3436;"></div><span style="left:849px;top:316px;color:#3465A4">Soubor</span><div style="left:912px;top:321px;width:212px;height:2px;background:#2E3436;"></div><div style="left:834px;top:321px;width:2px;height:236px;background:#2E3436;"></div><div style="left:1122px;top:321px;width:2px;height:236px;background:#2E3436;"></div><div style="left:834px;top:555px;width:290px;height:2px;background:#2E3436;"></div><span style="left:849px;top:334px;color:#2E3436">Name:</span><span style="left:849px;top:352px;color:#2E3436">NVIDIA-Linux-x86_64-319.82.run</span><span style="left:849px;top:370px;color:#2E3436">Permissions (octal):</span><span style="left:849px;top:388px;color:#2E3436">100600</span><span style="left:849px;top:406px;color:#2E3436">Owner name:</span><span style="left:849px;top:424px;color:#2E3436">bustercze</span><span style="left:849px;top:442px;color:#2E3436">Group name:</span><span style="left:849px;top:460px;color:#2E3436">bustercze</span><span style="left:705px;top:586px;color:#2E3436">[&lt; </span><span style="left:732px;top:586px;color:#3465A4">N</span><span style="left:741px;top:586px;color:#2E3436">astavit &gt;] [ </span><span style="left:858px;top:586px;color:#3465A4">Z</span><span style="left:867px;top:586px;color:#2E3436">rušit ]</span><div style="left:66px;top:835px;width:1530px;height:36px;background:#300A24;"></div><span style="left:66px;top:838px;color:#EEEEEC">Tip: Pokud Váš terminál nezná nebo nemá funkční klávesy, použijte Esc+číslo.</span><span style="left:66px;top:856px;color:#EEEEEC">bustercze@bustercze-Aspire-V3-771:~/Plocha$ [32;60;34M</span><div style="left:66px;top:871px;width:18px;height:18px;background:#2E3436;"></div><div style="left:84px;top:871px;width:135px;height:18px;background:#06989A;"></div><span class="b" style="left:75px;top:874px;color:#EEEEEC">1</span><span style="left:84px;top:874px;color:#2E3436">Pomoc</span><div style="left:219px;top:871px;width:18px;height:18px;background:#2E3436;"></div><div style="left:237px;top:871px;width:135px;height:18px;background:#06989A;"></div><span class="b" style="left:228px;top:874px;color:#EEEEEC">2</span><span style="left:237px;top:874px;color:#2E3436">Menu</span><div style="left:372px;top:871px;width:18px;height:18px;background:#2E3436;"></div><div style="left:390px;top:871px;width:135px;height:18px;background:#06989A;"></div><span class="b" style="left:381px;top:874px;color:#EEEEEC">3</span><span style="left:390px;top:874px;color:#2E3436">Zobraz</span><div style="left:525px;top:871px;width:18px;height:18px;background:#2E3436;"></div><div style="left:543px;top:871px;width:135px;height:18px;background:#06989A;"></div><span class="b" style="left:534px;top:874px;color:#EEEEEC">4</span><span style="left:543px;top:874px;color:#2E3436">Uprav</span><div style="left:678px;top:871px;width:18px;height:18px;background:#2E3436;"></div><div style="left:696px;top:871px;width:135px;height:18px;background:#06989A;"></div><span class="b" style="left:687px;top:874px;color:#EEEEEC">5</span><span style="left:696px;top:874px;color:#2E3436">Kopie</span><div style="left:831px;top:871px;width:18px;height:18px;background:#2E3436;"></div><div style="left:849px;top:871px;width:135px;height:18px;background:#06989A;"></div><span class="b" style="left:840px;top:874px;color:#EEEEEC">6</span><span style="left:849px;top:874px;color:#2E3436">Přesun</span><div style="left:984px;top:871px;width:18px;height:18px;background:#2E3436;"></div><div style="left:1002px;top:871px;width:135px;height:18px;background:#06989A;"></div><span class="b" style="left:993px;top:874px;color:#EEEEEC">7</span><span style="left:1002px;top:874px;color:#2E3436">NovAdr</span><div style="left:1137px;top:871px;width:18px;height:18px;background:#2E3436;"></div><div style="left:1155px;top:871px;width:135px;height:18px;background:#06989A;"></div><span class="b" style="left:1146px;top:874px;color:#EEEEEC">8</span><span style="left:1155px;top:874px;color:#2E3436">Smazat</span><div style="left:1290px;top:871px;width:18px;height:18px;background:#2E3436;"></div><div style="left:1308px;top:871px;width:135px;height:18px;background:#06989A;"></div><span class="b" style="left:1299px;top:874px;color:#EEEEEC">9</span><span style="left:1308px;top:874px;color:#2E3436">H.Menu</span><div style="left:1443px;top:871px;width:18px;height:18px;background:#2E3436;"></div><div style="left:1461px;top:871px;width:135px;height:18px;background:#06989A;"></div><span class="b" style="left:1443px;top:874px;color:#EEEEEC">10</span><span style="left:1461px;top:874px;color:#2E3436">Konec</span></div>
</body></html>
